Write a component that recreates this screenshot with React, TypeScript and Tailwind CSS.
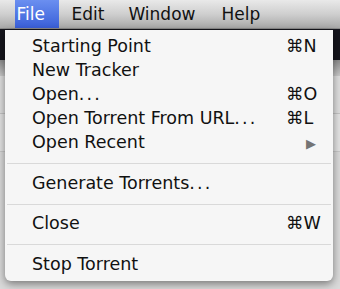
import React from "react";

type Item = { label: React.ReactNode; shortcut?: string; submenu?: boolean };

const Dots = () => <span className="tracking-[2.2px]">...</span>;

const Row = ({ label, shortcut, submenu }: Item) => (
  <div className="flex h-[24px] items-center leading-[24px]">
    <span className="flex-1 pl-[27px] whitespace-nowrap">{label}</span>
    <div className="flex h-[24px] w-[47px] shrink-0 items-center whitespace-nowrap">
      {shortcut ? shortcut : null}
      {submenu ? (
        <span className="ml-[20px] mt-[3px] text-[13px] leading-none text-[#747474]">▶</span>
      ) : null}
    </div>
  </div>
);

const Sep = () => (
  <div className="flex h-[16.5px] flex-col">
    <div className="h-[9px]" />
    <div className="mx-[2px] h-px bg-[#d9d9d9]" />
  </div>
);

export default function App() {
  return (
    <div
      className="relative h-[289px] w-[340px] overflow-hidden bg-[#d9d9d9] text-[#111111]"
      style={{ fontFamily: '"DejaVu Sans", "Liberation Sans", sans-serif' }}
    >
      {/* menu bar */}
      <div className="flex h-[29px] items-stretch border-b border-[#8a8a8a] bg-gradient-to-b from-[#e9e9e9] via-[#cfcfcf] to-[#a9a9a9] text-[17px] leading-[29px]">
        <div className="ml-[15px] w-[44px] bg-gradient-to-b from-[#6b8ff0] to-[#3a5fd8] pl-[1.5px] text-white">File</div>
        <div className="ml-[12.5px]">Edit</div>
        <div className="ml-[24px]">Window</div>
        <div className="ml-[26px]">Help</div>
      </div>
      {/* backdrop window */}
      <div className="h-[31px] bg-[#15151c]" />
      <div className="h-[16px] bg-gradient-to-b from-[#8d8d8d] to-[#c9c9c9]" />
      <div className="h-[38px] border-b border-[#c4c4c4] bg-[#dedede]" />
      <div className="h-[38px] border-b border-[#c8c8c8] bg-[#e3e3e3]" />
      <div className="h-[137px] bg-[#dadada]" />

      {/* dropdown panel */}
      <div className="absolute left-[5px] top-[30px] h-[251px] w-[328px] rounded-b-[6px] bg-[#f6f6f6] pt-[4px] text-[17.5px] shadow-[0_3px_9px_rgba(0,0,0,0.45)]">
        <Row label="Starting Point" shortcut="⌘N" />
        <Row label="New Tracker" />
        <Row label={<>Open<Dots /></>} shortcut="⌘O" />
        <Row label={<>Open Torrent From URL<Dots /></>} shortcut="⌘L" />
        <Row label="Open Recent" submenu />
        <Sep />
        <Row label={<>Generate Torrents<Dots /></>} />
        <Sep />
        <Row label="Close" shortcut="⌘W" />
        <Sep />
        <Row label="Stop Torrent" />
      </div>
    </div>
  );
}
